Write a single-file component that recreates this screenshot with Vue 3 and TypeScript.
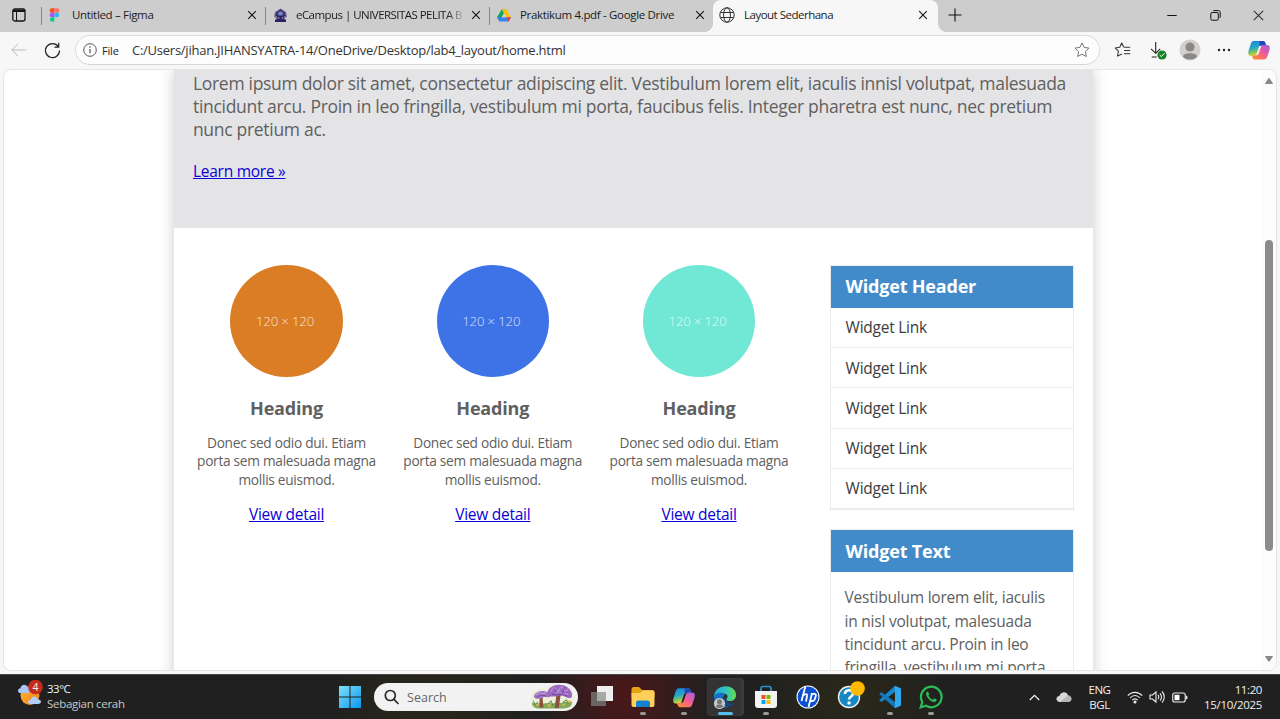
<script setup lang="ts">
interface Tab { id: string; title: string; cls: string }

const tabs: Tab[] = [
  { id: 'figma', title: 'Untitled – Figma', cls: 't1' },
  { id: 'campus', title: 'eCampus | UNIVERSITAS PELITA B', cls: 't2' },
  { id: 'drive', title: 'Praktikum 4.pdf - Google Drive', cls: 't3' },
  { id: 'page', title: 'Layout Sederhana', cls: 't4 active' },
]
const boxes: string[] = ['orange', 'blue', 'aqua']
const links: number[] = [1, 2, 3, 4, 5]
</script>

<template>
  <div class="screen">
    <header class="tabbar">
      <div class="tabmenu">
        <svg width="14" height="14" viewBox="0 0 14 14"><rect x=".8" y="1" width="12.2" height="12" rx="2" fill="none" stroke="#151515" stroke-width="1.3" /><path d="M1 1.8h12v2.2H1zM4 4h1v9H4z" fill="#151515" /></svg>
      </div>
      <div v-for="t in tabs" :key="t.id" class="tab" :class="t.cls">
        <span class="fav">
          <svg v-if="t.id === 'figma'" width="11" height="14" viewBox="0 0 12 15"><path d="M6 0H3.2a2.5 2.5 0 0 0 0 5H6z" fill="#f24e1e" /><path d="M6 0h2.8a2.5 2.5 0 0 1 0 5H6z" fill="#ff7262" /><path d="M6 5H3.2a2.5 2.5 0 0 0 0 5H6z" fill="#a259ff" /><circle cx="8.5" cy="7.5" r="2.5" fill="#1abcfe" /><path d="M6 10H3.2A2.5 2.5 0 1 0 6 12.5z" fill="#0acf83" /></svg>
          <svg v-else-if="t.id === 'campus'" width="15" height="15" viewBox="0 0 15 15"><path d="M7.5.5 13 4l1 5-2 1v3.500H3V10L1 9l1-5z" fill="#777096" /><path d="M7.500 1 12 4.500 13 8H2l1-3.500z" fill="#3c3477" /><circle cx="7.500" cy="6" r="2.400" fill="#7586ba" /><path d="M4 7.500h7v4h2V14H2v-2.500h2z" fill="#29245f" /><path d="M4.500 9.500h2v1h-2zm4 0h2v1h-2z" fill="#b8a7b5" /></svg>
          <svg v-else-if="t.id === 'drive'" width="14" height="13" viewBox="0 0 14 13"><path d="M4.700.3h4.600L2.500 12.200 0 8.300z" fill="#16a45a" /><path d="M4.700.3h4.600L14 8.300H9.300z" fill="#fcc110" /><path d="M2.400 8.300H14l-2.300 4.200H2.500L0 8.300z" fill="#3c82ee" /><path d="M9.300 8.300H14l-2.300 4.200z" fill="#e84335" /><path d="M7 4.200 9.300 8.300H4.700z" fill="#d2d2d2" /></svg>
          <svg v-else width="16" height="16" viewBox="0 0 16 16" fill="none" stroke="#333" stroke-width="1"><circle cx="8" cy="8" r="7.200" /><ellipse cx="8" cy="8" rx="3.400" ry="7.200" /><path d="M1.500 5.500h13M1.500 10.500h13" /></svg>
        </span>
        <span class="title">{{ t.title }}</span>
        <svg class="x" width="10" height="10" viewBox="0 0 10 10"><path d="M1.200 1.200l7.600 7.600M8.800 1.200 1.200 8.800" stroke="#191919" stroke-width="1.200" /></svg>
      </div>
      <svg class="plus" width="14" height="14" viewBox="0 0 14 14"><path d="M7 .5v13M.5 7h13" stroke="#111" stroke-width="1.100" /></svg>
      <div class="winbtns">
        <svg width="10" height="11" viewBox="0 0 10 11"><path d="M.3 5.500h9.400" stroke="#111" /></svg>
        <svg width="11" height="11" viewBox="0 0 11 11" fill="none" stroke="#111"><rect x=".8" y="2.500" width="7.500" height="7.700" rx="1.400" /><path d="M3 1.100C3.300.7 3.600.6 4 .6h4.200c1.300 0 2 .7 2 2v4.200c0 .6-.2 1-.6 1.200" /></svg>
        <svg width="11" height="11" viewBox="0 0 11 11"><path d="M.8.800l9.400 9.400M10.200.8.800 10.200" stroke="#333" stroke-width="1.100" /></svg>
      </div>
    </header>

    <div class="toolbar">
      <svg class="back" width="16" height="14" viewBox="0 0 16 14" fill="none" stroke="#bbb"><path d="M7.200.7.800 7l6.400 6.300M.8 7h14.700" /></svg>
      <svg class="reload" width="17" height="17" viewBox="0 0 17 17" fill="none" stroke="#222" stroke-width="1.200"><path d="M14.200 4.500A7 7 0 1 0 15.500 8.500M14.700.8v4.300h-4.200" /></svg>
      <div class="address">
        <svg width="14" height="14" viewBox="0 0 14 14"><circle cx="7" cy="7" r="6.300" fill="none" stroke="#555" /><path d="M7 6v4.200" stroke="#444" stroke-width="1.100" /><circle cx="7" cy="4" r=".8" fill="#444" /></svg>
        <span class="file">File</span>
        <span class="url">C:/Users/jihan.JIHANSYATRA-14/OneDrive/Desktop/lab4_layout/home.html</span>
        <svg class="star" width="16" height="16" viewBox="0 0 16 16"><path d="M8 1l2.100 4.400 4.900.7-3.500 3.500.8 4.900L8 12.200l-4.300 2.300.8-4.900L1 6.100l4.900-.7z" fill="none" stroke="#777" stroke-linejoin="round" /></svg>
      </div>
      <div class="tools">
        <svg width="18" height="16" viewBox="0 0 18 16" fill="none" stroke="#333" stroke-width="1.050" stroke-linejoin="round"><path d="M11.500 5.300 9.700 5 7.700 1 5.700 5.200l-4.600.7 3.300 3.300-.8 4.900L8 12M11.500 5.300h4.700M10 8.500h6.200M10 11.700h6.200" /></svg>
        <svg class="down" width="18" height="19" viewBox="0 0 18 19" fill="none"><path d="M6.700 1v11M2 7.800l4.700 4.500 4.500-4.500M2.700 16h5" stroke="#222" stroke-width="1.100" /><circle cx="13" cy="14" r="4.600" fill="#16832b" /><path d="m10.700 14 1.600 1.600 3-3.200" stroke="#fff" /></svg>
        <svg class="person" width="22" height="22" viewBox="0 0 22 22"><circle cx="11" cy="11" r="10.500" fill="#d2d0ce" /><circle cx="11" cy="8" r="4.600" fill="#8b8886" /><path d="M4 17.500c0-4.500 14-4.500 14 0-2.500 4-11.500 4-14 0z" fill="#8b8886" /></svg>
        <svg class="dots" width="14" height="4" viewBox="0 0 14 4" fill="#222"><circle cx="2" cy="2" r="1.200" /><circle cx="7" cy="2" r="1.200" /><circle cx="12" cy="2" r="1.200" /></svg>
        <svg class="pilot" width="22" height="20" viewBox="0 0 24 22"><use href="#copilot" /></svg>
      </div>
    </div>

    <div class="viewport">
      <main class="page">
        <section class="hero">
          <p>Lorem ipsum dolor sit amet, consectetur adipiscing elit. Vestibulum lorem elit, iaculis innisl volutpat, malesuada tincidunt arcu. Proin in leo fringilla, vestibulum mi porta, faucibus felis. Integer pharetra est nunc, nec pretium nunc pretium ac.</p>
          <a href="#">Learn more »</a>
        </section>
        <div class="body">
          <section class="columns">
            <article v-for="c in boxes" :key="c" class="box">
              <div class="circle" :class="c">120 × 120</div>
              <h3>Heading</h3>
              <p>Donec sed odio dui. Etiam porta sem malesuada magna mollis euismod.</p>
              <a href="#">View detail</a>
            </article>
          </section>
          <aside class="side">
            <div class="widget">
              <h3>Widget Header</h3>
              <ul><li v-for="n in links" :key="n">Widget Link</li></ul>
            </div>
            <div class="widget">
              <h3>Widget Text</h3>
              <p>Vestibulum lorem elit, iaculis in nisl volutpat, malesuada tincidunt arcu. Proin in leo fringilla, vestibulum mi porta</p>
            </div>
          </aside>
        </div>
      </main>
      <div class="scroll">
        <svg width="10" height="8" viewBox="0 0 10 8"><path d="M5 1.200 8.500 6.500h-7z" fill="#888" stroke="#888" stroke-linejoin="round" /></svg>
        <div class="thumb"></div>
        <svg width="10" height="8" viewBox="0 0 10 8"><path d="M5 6.500 8.500 1.500h-7z" fill="#888" stroke="#888" stroke-linejoin="round" /></svg>
      </div>
    </div>

    <footer class="taskbar">
      <div class="weather">
        <svg width="28" height="28" viewBox="0 0 28 28">
          <defs>
            <linearGradient id="sun" x2="1" y2="1"><stop stop-color="#ffc03b" /><stop offset="1" stop-color="#ed7611" /></linearGradient>
            <linearGradient id="cop1" x2=".3" y2="1"><stop stop-color="#1b7fe0" /><stop offset=".5" stop-color="#25a9c9" /><stop offset=".75" stop-color="#7cc267" /><stop offset="1" stop-color="#e5d92f" /></linearGradient>
            <linearGradient id="cop2" x1="1" x2=".2" y2="1"><stop stop-color="#9d62e7" /><stop offset=".5" stop-color="#ee5b9a" /><stop offset="1" stop-color="#ff8a35" /></linearGradient>
            <g id="copilot">
              <path d="M7.500 1h9c2 0 2.500 2 3.200 5h-5c-2 0-2.600 1-3.200 3l-2 6c-.6 2-1.500 2.500-4 2.500H3c-3 0-3.200-3-2.400-6L3 4C4 1.500 5 1 7.500 1z" fill="url(#cop1)" />
              <path d="M12.500 1h4c2 0 2.500 2 3.200 5h-5c-.8 0-1.400.2-1.900.6z" fill="#2045bd" />
              <path d="M16.500 21.500h-9c-2 0-2.500-2-3.200-4.500h4c2.300 0 3-1 3.700-3l2-6c.6-2 1.500-2.500 4-2.500h3c3 0 3.200 3 2.400 6L21 18.500c-1 2.500-2 3-4.500 3z" fill="url(#cop2)" />
            </g>
          </defs>
          <circle cx="13" cy="15.500" r="9.500" fill="url(#sun)" />
          <path d="M3 13c-3-.4-2.500-4.500.5-4.700C4 3.500 10 3.500 11 8c3 0 3 5 0 5z" fill="#a7c6f7" />
          <path d="M13 24c-3-.4-2.500-3.800.5-4.200C15 15.500 20 15.500 21 19.500c4 0 4 4.500 0 4.500z" fill="#b4cefa" />
          <circle cx="18.500" cy="7" r="7.300" fill="#c42b1c" />
        </svg>
        <span class="count">4</span>
        <div class="wtext"><div class="deg">33°C</div><div class="sky">Sebagian cerah</div></div>
      </div>
      <div class="apps">
        <div class="slot">
          <svg width="24" height="24" viewBox="0 0 24 24"><defs><linearGradient id="win" gradientUnits="userSpaceOnUse" x2="24" y2="24"><stop stop-color="#83e3fb" /><stop offset="1" stop-color="#0794ee" /></linearGradient></defs><path d="M1 1h10.500v10.500H1zM12.500 1H23v10.500H12.500zM1 12.500h10.500V23H1zM12.500 12.500H23V23H12.500z" fill="url(#win)" /></svg>
        </div>
        <div class="search">
          <svg width="15" height="16" viewBox="0 0 15 16" fill="none" stroke="#2b2b2b" stroke-width="1.700"><circle cx="6.300" cy="6.500" r="5" /><path d="m10 10.300 4 4.200" stroke-linecap="round" /></svg>
          <span>Search</span>
          <svg class="art" width="46" height="26" viewBox="0 0 48 26">
            <path d="M3 16C-1 8 8 4 16 4c7-6 29-5 30 6 3 7 0 15-9 15H11C4 25 1 21 3 16z" fill="#eef0dc" />
            <path d="M3 19c3 0 4 2 8 0 5 2 8-1 14 1 5-3 8 1 12-2 4 1 6-1 8 0 0 5-4 7-9 7H11c-5 0-8-2-8-6z" fill="#83a95a" />
            <path d="M11 12h3l1 12h-4zM28.500 11h4.500l-2 13.500h-4z" fill="#8b513f" />
            <path d="M5 13c1-8 16-8 18-1-2 2-5 1-7 1-4 2-9 3-11 0z" fill="#a676c6" /><path d="M19 9c2-12 23-12 26 1 0 6-4 4-7 3-3-2-6-1-9-1-4 1-10 1-10-3z" fill="#9a68be" />
            <path d="M7 11l4-3 3 2 4-2M22 8l4-5 4 4 4-5 4 5 3-2M28 9l4-2 3 3 6 0" stroke="#c9a0e4" fill="none" /><path d="M8 13l5-2 5 1M24 10l5 1 6-1 5 2M26 4l3 4M37 3l-2 6" stroke="#684080" stroke-width=".8" fill="none" />
            <path d="M4 17l3 4 2-3M20 20l3-3 2 5M35 19l4-3 2 4" stroke="#467c3b" fill="none" /><g fill="#e6b547"><circle cx="9" cy="21" r="1.300" /><circle cx="21" cy="22" r="1.400" /><circle cx="36" cy="21" r="1.300" /><circle cx="42" cy="18" r="1.300" /></g>
          </svg>
        </div>
        <div class="slot">
          <svg width="24" height="24" viewBox="0 0 24 24"><path d="M7 1h16v15H7z" fill="#eee" /><path d="M1 7h15v14H1z" fill="#6e6e6e" opacity=".9" /><path d="M7 7h9v9H7z" fill="#a8a8a8" /></svg>
        </div>
        <div class="slot on">
          <svg width="24" height="24" viewBox="0 0 24 24"><path d="M.5 4.500Q.5 2 3 2h5l3 3h10q2.500 0 2.500 2.500V12H.5z" fill="#e5a314" /><path d="M.5 8H9l3-2.500h9.500q2 0 2 2V20q0 2-2 2h-19q-2 0-2-2z" fill="#ffd05a" /><path d="M5 22v-4q0-2.500 2.500-2.500h9Q19 15.500 19 18v4z" fill="#1281ce" /></svg>
        </div>
        <div class="slot on"><svg width="22" height="21" viewBox="0 0 24 22"><use href="#copilot" /></svg></div>
        <div class="slot edge on">
          <svg width="26" height="26" viewBox="0 0 26 26"><defs><linearGradient id="e1" x2="1"><stop stop-color="#22a9df" /><stop offset=".55" stop-color="#2fc6bd" /><stop offset="1" stop-color="#67dc50" /></linearGradient></defs><path d="M2 13C2-1 24-1 24 11c0 4-3 6-6 6-2 0-4-.6-3.500-2C19 9 9 7 2 13z" fill="url(#e1)" /><path d="M2 13c0 8 7 12 14 10-6-2-7-8-3-13-5-3-11 0-11 3z" fill="#1470c4" /><path d="M11 14c-2 7 6 11 12 5-3 1.500-8 .5-9-3z" fill="#124a91" /><circle cx="7.500" cy="19.500" r="5.600" fill="#c9c7c5" /><circle cx="7.500" cy="17.800" r="2.500" fill="#777" /><path d="M3.800 22.500c1-3 6.500-3 7.500 0-2 2-5.500 2-7.500 0z" fill="#777" /></svg>
        </div>
        <div class="slot on">
          <svg width="24" height="24" viewBox="0 0 24 24"><path d="M7 7V3.500Q7 1.500 9 1.500h6q2 0 2 2V7" fill="none" stroke="#2494d4" stroke-width="1.700" /><path d="M1 6h22v14q0 3-3 3H4q-3 0-3-3z" fill="#f3f3f3" /><path d="M7.500 10h4v4h-4z" fill="#f05125" /><path d="M12.500 10h4v4h-4z" fill="#7fba00" /><path d="M7.500 15h4v4h-4z" fill="#00a4ef" /><path d="M12.500 15h4v4h-4z" fill="#ffb900" /></svg>
        </div>
        <div class="slot">
          <svg width="24" height="24" viewBox="0 0 24 24"><circle cx="12" cy="12" r="11.500" fill="#fff" /><circle cx="12" cy="12" r="10.500" fill="#0b4fd2" /><path d="M9.200 2 5.500 16M7 10.500q4.500-3 4 .5L10 16.500M16 8.500 12.500 22M14.800 8.800h3.400q2.200 0 1.500 2.500l-.9 3q-.6 1.700-2.500 1.700h-2.500" fill="none" stroke="#fff" stroke-width="1.800" /></svg>
        </div>
        <div class="slot">
          <svg class="help" width="30" height="30" viewBox="0 0 30 30"><circle cx="14" cy="16" r="11.200" fill="#eee" /><circle cx="14" cy="16" r="9.800" fill="#1689c4" /><path d="M10 13c0-5 8-5 8-.5 0 3-4 3-4 6" fill="none" stroke="#fff" stroke-width="2.600" /><circle cx="14" cy="22" r="1.700" fill="#fff" /><circle cx="22.500" cy="7.500" r="7.300" fill="#ffb900" /></svg>
        </div>
        <div class="slot on">
          <svg width="24" height="24" viewBox="0 0 24 24"><path d="M17 .8 23 3.500v17l-6 2.700z" fill="#32a9ef" /><path d="M17 .8 1.200 15l2.200 2L17 7z" fill="#1687cf" /><path d="M17 23.200 1.200 9l2.200-2L17 17z" fill="#1378bd" /></svg>
        </div>
        <div class="slot on">
          <svg width="24" height="24" viewBox="0 0 24 24" fill="none"><path d="M1.700 22.300 3.300 17A10.300 10.300 0 1 1 7 20.800z" stroke="#2dbb59" stroke-width="2.200" /><path d="M8.700 6.500c-1.500.5-2 2-1.500 3.500 1 3 4 6 7 7 2 .5 3.600-.7 3.500-2.400l-2.500-1.300-1.300 1.400c-2-.8-3.700-2.300-4.500-4.200l1-1.200z" fill="#2dbb59" /></svg>
        </div>
      </div>
      <div class="tray">
        <svg class="up" width="11" height="7" viewBox="0 0 11 7" fill="none" stroke="#eee" stroke-width="1.300"><path d="m.8 6 4.700-4.700L10.200 6" /></svg>
        <svg class="cloud" width="16" height="12" viewBox="0 0 16 12"><path d="M4 11c-4.500 0-4.700-5.500-.7-6C5 .2 11 .2 12 4.500c4.500.3 4.500 6.500 0 6.500z" fill="#d7d7d7" /><path d="M4.500 10.500 12 4.500c4.500.3 4.500 6.500 0 6.500H5z" fill="#b6b6b6" /></svg>
        <div class="lang"><div>ENG</div><div>BGL</div></div>
        <svg class="wifi" width="16" height="13" viewBox="0 0 16 13" fill="none" stroke="#eee" stroke-width="1.100"><path d="M.8 4.700c4-4.500 10.400-4.500 14.400 0M3 7c3-3.300 7-3.300 10 0M5.200 9.200c1.700-1.800 3.900-1.800 5.600 0" /><circle cx="8" cy="11" r="1" fill="#eee" /></svg>
        <svg class="vol" width="17" height="14" viewBox="0 0 17 14" fill="none" stroke="#eee" stroke-width="1.100"><path d="M1 5v4h2.500L7 12V2L3.500 5zM9 5c1 1 1 3 0 4M11 3.300c2 2 2 5.400 0 7.400M13 1.500c3 3 3 8 0 11" /></svg>
        <svg class="bat" width="16" height="11" viewBox="0 0 16 11"><rect x=".7" y="1" width="12.500" height="9" rx="2" fill="none" stroke="#eee" stroke-width="1.100" /><path d="M2.500 2.800h5v5.400h-5z" fill="#fff" /><path d="M14 3.500q1.500 0 1.500 2t-1.500 2z" fill="#eee" /></svg>
        <div class="clock"><div class="time">11:20</div><div class="date">15/10/2025</div></div>
      </div>
    </footer>
  </div>
</template>

<style>
html, body { margin: 0; overflow: hidden; }
</style>

<style scoped>
* { box-sizing: border-box; }
svg { display: block; flex: none; }
.screen { width: 1280px; height: 719px; display: flex; flex-direction: column; background: #f7f7f7; overflow: hidden; font-family: "Open Sans", "Noto Sans", sans-serif; }

.tabbar { height: 32px; flex: none; display: flex; background: #cdcdcd; font-size: 11.5px; color: #1b1b1b; }
.tabmenu { width: 41px; padding: 8px 0 0 12px; }
.tab { height: 32px; display: flex; align-items: center; padding: 0 8px 2px 8px; position: relative; }
.tab::before { content: ""; position: absolute; left: 0; top: 7px; height: 18px; width: 1px; background: #858585; }
.t1, .t2, .t3 { width: 224px; }
.tab.active { width: 225px; background: #f7f7f7; border-radius: 8px 8px 0 0; padding-left: 6px; padding-right: 10px; }
.tab.active::before { left: -8px; top: auto; bottom: 0; width: 8px; height: 8px; background: radial-gradient(circle at 0 0, transparent 7.500px, #f7f7f7 8px); }
.tab.active::after { content: ""; position: absolute; right: -8px; bottom: 0; width: 8px; height: 8px; background: radial-gradient(circle at 100% 0, transparent 7.500px, #f7f7f7 8px); }
.fav { width: 23px; flex: none; }
.active .fav { width: 25px; }
.title { white-space: nowrap; flex: 1; letter-spacing: -.33px; line-height: 16px; margin-top: -1px; }
.t2 .title { letter-spacing: -.54px; background: linear-gradient(90deg, #1b1b1b 150px, #aaa 166px); background-clip: text; color: transparent; }
.active .title { letter-spacing: -.55px; }
.t4 .title { letter-spacing: -.5px; }
.x { flex: none; }
.plus { margin: 8px 0 0 10px; }
.winbtns { margin-left: auto; display: flex; gap: 32.500px; padding: 10px 16px 0 0; }

.toolbar { height: 37px; flex: none; display: flex; align-items: center; padding: 0 0 1px 11px; }
.reload { margin-left: 17px; }
.address { margin-left: 14px; width: 1025px; height: 30px; border: 1px solid #dcdcdc; border-bottom-color: #d5d5d5; border-radius: 15px; background: #fdfdfd; display: flex; align-items: center; padding: 0 9px 0 7px; color: #333; }
.file { font-size: 11px; margin-left: 5px; width: 30px; color: #222; letter-spacing: -.2px; }
.url { font-size: 13px; letter-spacing: -.25px; white-space: nowrap; }
.star { margin-left: auto; }
.tools { display: flex; align-items: center; margin-left: 14px; }
.down { margin-left: 17px; }
.person { margin-left: 12px; }
.dots { margin-left: 16px; }
.pilot { margin-left: 17px; }

.viewport { height: 602px; margin: 0 3px 0 3px; flex: none; background: #fff; border: 1px solid #e5e5e5; border-radius: 8px; overflow: hidden; display: flex; margin-top: -.5px; }
.page { width: 918.75px; height: 700px; margin-left: 170.200px; box-shadow: 0 0 14px #ccc; background: #fff; color: #606060; flex: none; }
.hero { height: 158px; background: #e4e4e6; padding: 2px 18.750px 0; }
p { margin: 0; }
.hero p { font-size: 17.500px; line-height: 23.440px; letter-spacing: -.3px; margin-right: -4px; }
a { color: #0a00d8; font-size: 15.500px; letter-spacing: -.26px; line-height: 23.440px; display: inline-block; }
.hero a { margin-top: 18px; }
.body { display: flex; }
.columns { display: flex; width: 618.750px; margin-left: 9.200px; padding-top: 37.200px; }
.box { width: 206.250px; padding: 0 9px; text-align: center; }
.circle { width: 112.500px; height: 112.500px; border-radius: 50%; margin: 0 auto; display: flex; align-items: center; justify-content: center; font-size: 13.200px; letter-spacing: -.15px; font-weight: 300; color: rgba(255, 255, 255, .8); padding-right: 3px; }
.orange { background: #da7d25; }
.blue { background: #3e73e7; }
.aqua { background: #71e8d5; }
h3 { margin: 0; font-size: 18px; letter-spacing: -.2px; line-height: 23.440px; font-weight: 700; }
.box h3 { margin-top: 19.500px; }
.box p { font-size: 13.700px; letter-spacing: -.28px; line-height: 18.750px; margin: 13.500px 0 13px; }
.side { width: 244px; margin-left: 27.800px; padding-top: 37.200px; }
.widget { border: 1px solid #ececec; margin-bottom: 18.750px; }
.widget h3 { background: #428bca; color: #fff; height: 42.200px; padding: 9.800px 14.700px; }
.widget ul { list-style: none; margin: 0; padding: 0; }
.widget li { height: 40.250px; border-bottom: 1px solid #ececec; padding: 8.600px 14.700px; font-size: 15.500px; letter-spacing: -.25px; line-height: 23.440px; color: #3c3c3c; }
.widget p { padding: 14px 13.600px; font-size: 15.500px; letter-spacing: -.22px; line-height: 23.440px; }
.scroll { margin-left: auto; width: 14px; display: flex; flex-direction: column; align-items: center; padding: 7px 0; background: #fcfcfc; }
.thumb { width: 8px; height: 311px; margin: 155px 0 auto; border-radius: 4px; background: #8b8b8b; }

.taskbar { height: 45px; flex: none; margin-top: 3.500px; display: flex; color: #f2f2f2; border-top: 1px solid #484848; background: radial-gradient(ellipse 90px 80px at 625px 22px, #4c1719, transparent), radial-gradient(ellipse 100px 60px at 430px 22px, #2b2919, transparent), radial-gradient(ellipse 100px 60px at 850px 22px, #2b2919, transparent), #202020; }
.weather { width: 329.400px; display: flex; padding: 5px 0 0 17px; position: relative; flex: none; }
.count { position: absolute; left: 29px; top: 4.500px; width: 13px; text-align: center; font-size: 10.500px; line-height: 15px; }
.wtext { font-size: 11.500px; line-height: 15px; padding-top: 1px; margin-left: 2px; white-space: nowrap; }
.deg { letter-spacing: -.5px; }
.sky { color: #c9c9c9; letter-spacing: -.3px; }
.apps { display: flex; flex: none; }
.slot { width: 41.200px; height: 44px; display: flex; align-items: center; justify-content: center; position: relative; }
.slot.on::after { content: ""; position: absolute; left: 17.500px; bottom: 4px; width: 6px; height: 3px; border-radius: 2px; background: #999; }
.slot.edge::before { content: ""; position: absolute; inset: 3px 2px 3px 2px; border-radius: 4px; background: #333; border: 1px solid #3b3b3b; border-right-width: 3px; }
.edge svg { position: relative; }
.slot.edge.on::after { left: 13px; width: 15px; background: #57bcec; }
.help { margin-top: -3px; margin-left: 2px; }
.search { width: 204px; height: 28px; margin: 8px 3px 0 3.500px; border-radius: 14px; background: #f2f2f2; display: flex; align-items: center; padding: 0 0 0 10px; color: #666; font-size: 12.500px; flex: none; }
.search span { margin-left: 8px; }
.art { margin-left: auto; margin-right: 3px; }
.tray { margin-left: auto; display: flex; align-items: center; padding-right: 18px; font-size: 11.500px; line-height: 15px; white-space: nowrap; }
.cloud { margin-left: 16.500px; }
.lang { margin-left: 16px; width: 23px; text-align: center; letter-spacing: -.5px; margin-top: -1px; }
.wifi { margin-left: 16px; }
.vol { margin-left: 6px; }
.bat { margin-left: 6px; }
.clock { width: 74px; text-align: right; margin-top: -1px; }
.time { letter-spacing: -.4px; }
.date { letter-spacing: -.3px; }
</style>
